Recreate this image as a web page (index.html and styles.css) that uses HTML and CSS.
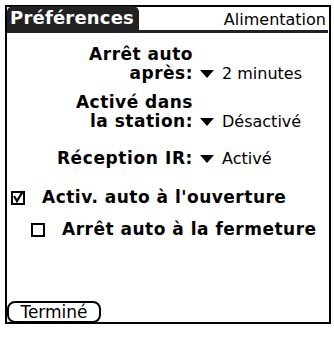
FILE: index.html
```html
<!DOCTYPE html>
<html lang="fr">
<head>
<meta charset="utf-8">
<title>Préférences</title>
<link rel="stylesheet" href="styles.css">
</head>
<body>
<div class="screen">
  <div class="titlebar">
    <div class="tab">Préférences</div>
    <div class="panel">Alimentation</div>
  </div>
  <div class="form">
    <div class="row two">
      <div class="label">Arrêt auto<br>après:</div>
      <div class="value"><span class="tri"></span>2 minutes</div>
    </div>
    <div class="row two">
      <div class="label">Activé dans<br>la station:</div>
      <div class="value"><span class="tri"></span>Désactivé</div>
    </div>
    <div class="row one">
      <div class="label spaced">Réception IR:</div>
      <div class="value"><span class="tri"></span>Activé</div>
    </div>
  </div>
  <div class="checks">
    <div class="check first">
      <svg class="box" width="14" height="15" viewBox="0 0 14 15"><rect x="1" y="2" width="12" height="12" fill="none" stroke="#000" stroke-width="2"/><path d="M3 6 L6 11 L12 1" fill="none" stroke="#000" stroke-width="2.2"/></svg>
      <span>Activ. auto à l'ouverture</span>
    </div>
    <div class="check second">
      <svg class="box" width="14" height="15" viewBox="0 0 14 15"><rect x="1" y="2" width="12" height="12" fill="none" stroke="#000" stroke-width="2"/></svg>
      <span>Arrêt auto à la fermeture</span>
    </div>
  </div>
  <div class="footer">
    <div class="btn">Terminé</div>
  </div>
</div>
</body>
</html>
```
FILE: styles.css
```css
html, body {
  margin: 0;
  padding: 0;
  background: #fff;
}
body {
  font-family: "DejaVu Sans", "Liberation Sans", sans-serif;
  color: #000;
}
.screen {
  margin: 5px 0 0 5px;
  width: 326px;
  height: 319px;
  border: 2px solid #000;
  box-sizing: border-box;
  display: flex;
  flex-direction: column;
}
.titlebar {
  display: flex;
  align-items: flex-end;
  justify-content: space-between;
  border-bottom: 3px solid #222;
  height: 26px;
  box-sizing: border-box;
  margin: 0 1px 0 0;
}
.tab {
  background: #222;
  color: #fff;
  font-weight: bold;
  font-size: 18px;
  height: 24px;
  line-height: 24px;
  padding: 0 5px 0 3px;
  border-radius: 6px 6px 0 0;
  letter-spacing: 0.2px;
}
.panel {
  font-size: 16px;
  line-height: 20px;
  padding-right: 2px;
}
.form {
  display: grid;
  grid-template-columns: 186px auto;
  column-gap: 7px;
  row-gap: 10px;
  margin-top: 12px;
}
.row {
  display: contents;
}
.label {
  font-weight: bold;
  font-size: 17px;
  line-height: 19px;
  text-align: right;
  letter-spacing: 0.5px;
}
.spaced {
  letter-spacing: 0.6px;
  margin-top: 8px;
}
.value {
  font-size: 16px;
  line-height: 19px;
  align-self: end;
  display: flex;
  align-items: center;
}
.one .value {
  margin-top: 8px;
}
.tri {
  width: 0;
  height: 0;
  border-left: 7px solid transparent;
  border-right: 7px solid transparent;
  border-top: 8px solid #000;
  margin-right: 8px;
}
.checks {
  margin-top: 20px;
  display: flex;
  flex-direction: column;
  gap: 13px;
}
.check {
  display: flex;
  align-items: center;
  font-weight: bold;
  font-size: 17px;
  line-height: 19px;
  letter-spacing: 0.5px;
}
.check .box {
  margin-right: 17px;
}
.first {
  padding-left: 4px;
}
.second {
  padding-left: 24px;
}
.footer {
  margin-top: auto;
  display: flex;
}
.btn {
  border: 2px solid #000;
  border-radius: 8px;
  font-size: 17px;
  line-height: 18px;
  padding: 0 5px;
  width: 80px;
  text-align: center;
  margin-bottom: -1px;
}
```
